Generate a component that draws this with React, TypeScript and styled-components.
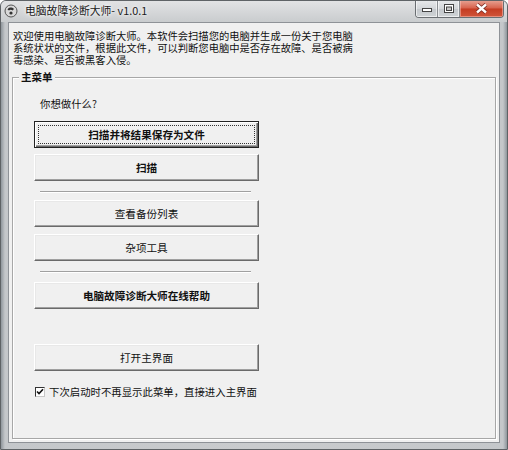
import styled, { createGlobalStyle } from 'styled-components';

const GlobalStyle = createGlobalStyle`
  html, body {
    margin: 0;
    padding: 0;
    background: #ffffff;
  }
  * {
    box-sizing: border-box;
  }
`;

const FONT = `"Noto Sans CJK SC", "Liberation Sans", sans-serif`;

type MenuItem = { label: string; bold?: boolean; isDefault?: boolean; gap: number };

const items: (MenuItem | 'sep')[] = [
  { label: '扫描并将结果保存为文件', bold: true, isDefault: true, gap: 11 },
  { label: '扫描', bold: true, gap: 6 },
  'sep',
  { label: '查看备份列表', gap: 7 },
  { label: '杂项工具', gap: 7 },
  'sep',
  { label: '电脑故障诊断大师在线帮助', bold: true, gap: 9 },
  { label: '打开主界面', gap: 35 },
];

const App = () => {
  return (
    <>
      <GlobalStyle />
      <Window>
        <TitleBar>
          <AppIcon viewBox='0 0 14 14'>
            <circle cx='7' cy='7' r='6' fill='#d8d8d8' stroke='#555' strokeWidth='1' />
            <path d='M3.5 5.5 C5 3, 8 3, 10 5 L8.5 6.5 C7.5 5.5, 6 5.5, 5 6.5 Z' fill='#333' />
            <circle cx='7' cy='9' r='1.6' fill='#333' />
          </AppIcon>
          <Title>电脑故障诊断大师- v1.0.1</Title>
          <Controls>
            <CtrlButton>
              <svg width='10' height='6' viewBox='0 0 10 6'>
                <rect x='0.5' y='2.5' width='9' height='3' fill='#fff' stroke='#444' />
              </svg>
            </CtrlButton>
            <CtrlButton>
              <svg width='10' height='9' viewBox='0 0 10 9'>
                <rect x='0.5' y='0.5' width='9' height='8' fill='#fff' stroke='#444' />
                <rect x='2.5' y='3' width='5' height='3.5' fill='#c8c8c8' stroke='#444' />
              </svg>
            </CtrlButton>
            <CloseButton>
              <svg width='13' height='11' viewBox='0 0 13 11'>
                <path
                  d='M2 1.5 L6.5 5.5 L11 1.5 M2 9.5 L6.5 5.5 L11 9.5'
                  stroke='#7a2a20'
                  strokeWidth='4'
                  fill='none'
                />
                <path
                  d='M2 1.5 L6.5 5.5 L11 1.5 M2 9.5 L6.5 5.5 L11 9.5'
                  stroke='#ffffff'
                  strokeWidth='2.4'
                  fill='none'
                />
              </svg>
            </CloseButton>
          </Controls>
        </TitleBar>
        <Frame>
          <Client>
            <Description>
              欢迎使用电脑故障诊断大师。本软件会扫描您的电脑并生成一份关于您电脑
              <br />
              系统状状的文件，根据此文件，可以判断您电脑中是否存在故障、是否被病
              <br />
              毒感染、是否被黑客入侵。
            </Description>
            <Group>
              <Legend>主菜单</Legend>
              <GroupBody>
                <Question>你想做什么?</Question>
                {items.map((item, i) =>
                  item === 'sep' ? (
                    <Separator key={i} />
                  ) : (
                    <MenuButton
                      key={i}
                      $bold={item.bold}
                      $default={item.isDefault}
                      $gap={item.gap}
                    >
                      <span>{item.label}</span>
                    </MenuButton>
                  )
                )}
                <CheckRow>
                  <CheckBox>
                    <svg width='8' height='8' viewBox='0 0 8 8'>
                      <path d='M1 3.5 L3 5.5 L7 1.2' stroke='#111' strokeWidth='1.6' fill='none' />
                    </svg>
                  </CheckBox>
                  <CheckLabel>下次启动时不再显示此菜单，直接进入主界面</CheckLabel>
                </CheckRow>
              </GroupBody>
            </Group>
          </Client>
        </Frame>
      </Window>
    </>
  );
};

export default App;

const Window = styled.div`
  width: 508px;
  height: 450px;
  display: flex;
  flex-direction: column;
  border: 1px solid #5f6366;
  border-radius: 6px 6px 0 0;
  background: linear-gradient(to right, #8f969c 0px, #c4c7ca 4px, #c9cbcd 50%, #c4c7ca calc(100% - 4px), #8f969c 100%);
  overflow: hidden;
  font-family: ${FONT};
  color: #111;
`;

const TitleBar = styled.div`
  height: 21px;
  display: flex;
  align-items: flex-start;
  padding: 0 3px 0 3px;
  background: linear-gradient(to bottom, #e2e3e4 0%, #d3d5d7 60%, #c9ccce 100%);
`;

const AppIcon = styled.svg`
  width: 14px;
  height: 14px;
  margin-top: 3px;
  flex-shrink: 0;
`;

const Title = styled.div`
  flex: 1;
  margin-left: 7px;
  margin-top: 2px;
  font-size: 10.8px;
  line-height: 15px;
  color: #1a1a1a;
  white-space: nowrap;
  text-shadow: 0 0 6px #ffffff, 0 0 3px #ffffff;
`;

const Controls = styled.div`
  display: flex;
  margin-top: -1px;
  border: 1px solid #6a6e72;
  border-top: none;
  border-radius: 0 0 4px 4px;
  overflow: hidden;
`;

const CtrlButton = styled.div`
  width: 22px;
  height: 17px;
  display: flex;
  align-items: center;
  justify-content: center;
  background: linear-gradient(to bottom, #e8eaec 0%, #d4d7da 50%, #c3c7cb 51%, #cfd3d6 100%);
  border-right: 1px solid #8a8e92;
  box-shadow: inset 0 0 0 1px rgba(255, 255, 255, 0.6);
`;

const CloseButton = styled.div`
  width: 43px;
  height: 17px;
  display: flex;
  align-items: center;
  justify-content: center;
  background: linear-gradient(to bottom, #e8a596 0%, #d7624c 48%, #c43c22 52%, #d0553a 100%);
  box-shadow: inset 0 0 0 1px rgba(255, 200, 190, 0.5);
`;

const Frame = styled.div`
  flex: 1;
  display: flex;
  padding: 0 7px 6px 7px;
`;

const Client = styled.div`
  flex: 1;
  display: flex;
  flex-direction: column;
  background: #f0f0f0;
  border: 1px solid #8e9297;
`;

const Description = styled.div`
  padding: 7px 0 0 4px;
  font-size: 10.3px;
  line-height: 12px;
  white-space: nowrap;
`;

const Group = styled.fieldset`
  flex: 1;
  margin: 5px 3px 3px 3px;
  padding: 0;
  min-width: 0;
  border: 1px solid #a7a7a7;
  box-shadow: inset 1px 1px 0 #ffffff, 1px 1px 0 #ffffff;
`;

const Legend = styled.legend`
  margin-left: 6px;
  padding: 0 2px;
  font-size: 10.5px;
  line-height: 12px;
  font-weight: 700;
  background: #f0f0f0;
`;

const GroupBody = styled.div`
  display: flex;
  flex-direction: column;
  align-items: flex-start;
  padding: 15px 0 0 21px;
`;

const Question = styled.div`
  margin-left: 6px;
  font-size: 10.4px;
  line-height: 12px;
`;

const MenuButton = styled.div<{ $bold?: boolean; $default?: boolean; $gap: number }>`
  width: 225px;
  height: 27px;
  margin-top: ${(p) => p.$gap}px;
  display: flex;
  align-items: center;
  justify-content: center;
  background: #f0f0f0;
  font-size: 10.6px;
  font-weight: ${(p) => (p.$bold ? 700 : 400)};
  border: 1px solid;
  border-color: ${(p) => (p.$default ? '#222 #222 #222 #222' : '#ffffff #6a6a6a #6a6a6a #ffffff')};
  box-shadow: ${(p) =>
    p.$default
      ? 'inset 1px 1px 0 #ffffff, inset -1px -1px 0 #6a6a6a, inset -2px -2px 0 #a0a0a0'
      : 'inset -1px -1px 0 #a0a0a0, inset 1px 1px 0 #e8e8e8'};
  position: relative;

  span {
    line-height: 13px;
  }

  &::after {
    content: '';
    display: ${(p) => (p.$default ? 'block' : 'none')};
    position: absolute;
    inset: 3px;
    border: 1px dotted #333;
  }
`;

const Separator = styled.div`
  width: 211px;
  margin: 10px 0 0 6px;
  border-top: 1px solid #a0a0a0;
  border-bottom: 1px solid #ffffff;
`;

const CheckRow = styled.div`
  display: flex;
  align-items: center;
  margin-top: 15px;
  margin-left: 1px;
`;

const CheckBox = styled.div`
  width: 10px;
  height: 10px;
  display: flex;
  align-items: center;
  justify-content: center;
  background: #ffffff;
  border: 1px solid #333;
  border-right-color: #c8c8c8;
  border-bottom-color: #c8c8c8;
`;

const CheckLabel = styled.div`
  margin-left: 4px;
  font-size: 10.4px;
  line-height: 12px;
`;
